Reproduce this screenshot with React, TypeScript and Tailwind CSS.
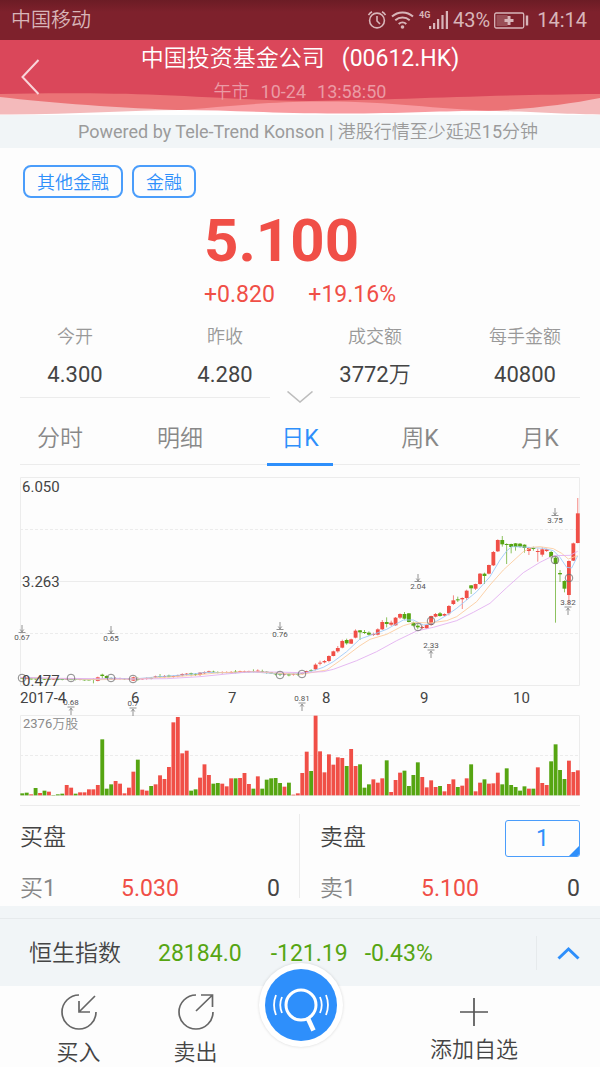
import React, { useState } from "react";

type Side = "r" | "g";

// [side, high, body top, body bottom, low], in thirds of a pixel
type Candle = [Side, number, number, number, number];

interface Mark {
  x: number;
  y: number;
  text: string;
  up?: boolean;
}

const RED = "#f04f47";
const GREEN = "#56a512";
const STEP = 40 / 3;

const volumes =
  "g6 g8 r3 g22 r7 g14 r11 g1 g3 g5 r31 r23 g5 r9 r9 r18 r18 r31 g168 g20 g33 r43 r35 r6 r23 r71 g107 r17 r14 g28 r33 r60 r49 r85 r219 r235 r126 r134 g14 g18 r53 r93 r61 g35 g37 r35 r27 r51 g51 r52 r67 r34 g20 r57 g20 g47 g51 g52 g37 r26 g38 r2 r6 r67 r131 g73 r239 r132 r69 r123 r92 r114 r112 g88 r139 r88 g93 g23 g33 r48 r38 r51 g105 r10 r46 r68 g74 g28 g61 g99 r55 r24 r45 r25 g28 r12 r34 r48 g25 r29 r51 g93 r12 r38 g48 r35 r36 r68 g33 g81 g31 g25 g14 g27 r20 g20 r84 r37 r31 g102 g153 g76 g49 r104 r70 r75"
    .split(" ")
    .map((v) => ({ side: v[0] as Side, height: Number(v.slice(1)) }));

// the first months barely move, so only the middle of each day is kept
const flatDays = [
  624, 625, 626, 626, 625, 627, 627, 627, 628, 628, 627, 628, 628, 628, 629, 629,
];

const candles: Candle[] = [
  ...flatDays.map((y, i): Candle => [i % 3 === 1 ? "r" : "g", y - 2, y - 1, y + 2, y + 3]),
  ["g", 625, 627, 629, 640], ["r", 620, 622, 633, 634], ["g", 611, 614, 618, 626],
  ["g", 616, 618, 626, 627], ["g", 622, 624, 627, 630], ["r", 622, 625, 627, 630],
  ["r", 623, 625, 627, 629], ["g", 624, 626, 628, 630], ["r", 624, 626, 628, 630],
  ["r", 620, 622, 632, 633], ["g", 622, 626, 629, 632], ["r", 624, 626, 628, 629],
  ["r", 622, 625, 627, 629], ["g", 621, 624, 626, 628], ["r", 617, 619, 622, 624],
  ["g", 612, 619, 621, 624], ["r", 615, 618, 621, 623], ["g", 614, 617, 620, 622],
  ["r", 616, 618, 621, 623], ["r", 614, 616, 619, 622], ["r", 610, 612, 616, 619],
  ["r", 609, 611, 614, 617], ["g", 608, 610, 613, 619], ["g", 609, 612, 614, 618],
  ["r", 606, 608, 615, 618], ["r", 604, 606, 610, 612], ["r", 602, 604, 607, 609],
  ["g", 602, 605, 607, 609], ["g", 604, 606, 608, 610], ["r", 604, 607, 609, 611],
  ["r", 604, 607, 609, 610], ["r", 603, 606, 609, 611], ["g", 600, 605, 608, 610],
  ["r", 602, 604, 606, 608], ["r", 602, 604, 606, 609], ["r", 602, 603, 606, 608],
  ["g", 598, 603, 605, 607], ["r", 598, 602, 605, 607], ["g", 599, 604, 606, 608],
  ["g", 604, 605, 608, 611], ["g", 606, 607, 610, 612], ["g", 608, 610, 613, 616],
  ["g", 608, 611, 614, 618], ["r", 609, 612, 614, 616], ["g", 610, 613, 616, 619],
  ["r", 610, 613, 615, 617], ["g", 608, 612, 614, 617], ["r", 606, 609, 612, 614],
  ["r", 602, 603, 608, 609], ["g", 598, 601, 603, 605],
  ["r", 580, 584, 598, 601], ["r", 572, 578, 581, 586], ["r", 570, 573, 577, 580],
  ["r", 556, 558, 573, 577], ["r", 542, 544, 558, 559], ["r", 528, 534, 544, 548],
  ["r", 509, 513, 533, 535], ["g", 506, 510, 520, 524], ["r", 506, 508, 521, 522],
  ["r", 478, 482, 503, 505], ["g", 480, 481, 487, 510], ["g", 480, 486, 489, 492],
  ["g", 484, 488, 494, 497], ["r", 488, 492, 495, 498], ["r", 475, 478, 494, 496],
  ["r", 450, 456, 478, 480], ["g", 442, 456, 462, 472], ["r", 452, 458, 464, 468],
  ["r", 441, 443, 466, 467], ["r", 430, 432, 443, 447], ["g", 426, 432, 446, 449],
  ["g", 429, 430, 456, 457], ["g", 455, 458, 467, 470], ["g", 462, 467, 472, 478],
  ["r", 467, 471, 474, 478], ["r", 463, 465, 475, 477], ["r", 437, 438, 465, 467],
  ["r", 429, 432, 440, 442], ["g", 426, 430, 438, 440], ["r", 430, 432, 437, 439],
  ["r", 405, 408, 430, 436], ["r", 376, 391, 402, 405], ["g", 380, 388, 391, 396],
  ["r", 382, 384, 388, 417], ["r", 359, 362, 384, 390], ["g", 345, 346, 355, 372],
  ["r", 341, 342, 356, 360], ["r", 309, 311, 342, 344], ["g", 308, 311, 318, 342],
  ["r", 284, 285, 311, 313], ["r", 243, 246, 286, 288], ["r", 208, 210, 244, 246],
  ["g", 198, 210, 223, 230], ["g", 220, 222, 225, 282], ["g", 221, 222, 231, 250],
  ["g", 219, 220, 231, 242], ["g", 219, 221, 230, 233], ["g", 223, 224, 234, 248],
  ["r", 231, 234, 243, 255], ["g", 230, 234, 237, 242], ["r", 236, 243, 246, 275],
  ["r", 232, 238, 254, 260], ["r", 236, 238, 243, 246], ["g", 243, 246, 261, 266],
  ["g", 260, 263, 282, 458], ["g", 300, 309, 313, 336], ["g", 331, 333, 356, 367],
  ["r", 271, 273, 375, 402], ["r", 218, 220, 272, 273], ["r", 84, 130, 219, 220],
];

const averages = [
  {
    color: "#9cc8f8",
    points:
      "0,623 120,627 240,629 270,624 340,627 420,620 500,614 560,607 640,609 700,606 780,612 845,611 880,602 910,592 940,575 980,545 1020,507 1060,493 1100,478 1150,450 1180,450 1210,465 1235,462 1280,436 1310,415 1370,365 1410,320 1440,270 1460,243 1475,230 1510,231 1570,235 1600,242 1620,262 1640,292 1655,294 1673,258",
  },
  {
    color: "#fbcb9c",
    points:
      "0,623 120,626 240,629 340,627 440,622 520,616 600,608 700,605 780,610 845,613 920,600 960,572 1020,527 1050,508 1100,493 1150,467 1185,457 1230,459 1280,452 1310,440 1370,395 1410,345 1450,300 1510,245 1535,232 1560,230 1600,236 1625,250 1645,267 1673,257",
  },
  {
    color: "#e2aef0",
    points:
      "0,622 120,625 240,626 340,627 440,626 540,620 620,612 680,606 760,606 845,608 910,605 940,598 1010,572 1070,545 1130,512 1190,483 1240,472 1310,452 1360,427 1410,400 1460,353 1510,308 1560,277 1600,257 1650,256 1673,244",
  },
];

const rings = [
  [22, 208], [71, 208], [111, 208], [133, 209], [280, 205],
  [302, 204], [418, 157], [431, 151], [555, 90], [569, 108],
];

const marks: Mark[] = [
  { x: 22, y: 167, text: "0.67" },
  { x: 111, y: 168, text: "0.65" },
  { x: 280, y: 164, text: "0.76" },
  { x: 418, y: 116, text: "2.04" },
  { x: 555, y: 50, text: "3.75" },
  { x: 71, y: 232, text: "0.68", up: true },
  { x: 133, y: 233, text: "0.7", up: true },
  { x: 302, y: 228, text: "0.81", up: true },
  { x: 431, y: 175, text: "2.33", up: true },
  { x: 568, y: 132, text: "3.82", up: true },
];

const months = [
  { x: 131, text: "6" },
  { x: 228, text: "7" },
  { x: 322, text: "8" },
  { x: 420, text: "9" },
  { x: 513, text: "10" },
];

const stats = [
  { label: "今开", value: "4.300" },
  { label: "昨收", value: "4.280" },
  { label: "成交额", value: "3772万" },
  { label: "每手金额", value: "40800" },
];

const tabs = ["分时", "明细", "日K", "周K", "月K"];

const StatusBar = () => (
  <div className="flex h-10 items-center justify-between bg-gradient-to-b from-[#6c1c25] to-[#7e212c] to-30% pl-[11px] pr-[13px] text-[20px] text-[#d8b5b9]">
    <span>中国移动</span>
    <div className="flex items-center">
      <svg width="20" height="20" viewBox="0 0 20 20" fill="none" stroke="currentColor" strokeWidth="1.6">
        <circle cx="10" cy="10.5" r="7.4" />
        <path d="M10 6v5l3 3M1.5 5.2A9 9 0 0 1 5 1.8M18.5 5.2A9 9 0 0 0 15 1.8" />
      </svg>
      <svg className="ml-1" width="23" height="20" viewBox="0 0 23 20" fill="none" stroke="currentColor" strokeWidth="2">
        <path d="M1 6.5a15.5 15.5 0 0 1 21 0M4.3 10.3a10.8 10.8 0 0 1 14.4 0M7.7 14a5.6 5.6 0 0 1 7.6 0" />
        <circle cx="11.5" cy="17" r="1.8" fill="currentColor" stroke="none" />
      </svg>
      <svg className="ml-1" width="31" height="20" viewBox="0 0 31 20" fill="currentColor">
        <text x="1" y="8" fontSize="9" fontWeight="700">4G</text>
        <path d="M11 16h2.2v3H11zM15 13h2.2v6H15zM19 9h2.2v10H19zM23.4 5h2.2v14h-2.2zM27.8 1H30v18h-2.2z" />
      </svg>
      <span className="ml-1">43%</span>
      <svg className="ml-1" width="35" height="17" viewBox="0 0 35 17">
        <rect x="0.7" y="1" width="29" height="15" rx="1.5" fill="none" stroke="currentColor" strokeWidth="1.3" />
        <rect x="2.5" y="3" width="11" height="11" fill="currentColor" opacity="0.3" />
        <path d="M15 4v9M10.5 8.5h9" stroke="currentColor" strokeWidth="3" />
        <path d="M33 3.5v10" stroke="currentColor" strokeWidth="2.4" />
      </svg>
      <span className="ml-2">14:14</span>
    </div>
  </div>
);

const Header = () => (
  <header className="relative h-[75px] bg-[#da475a] text-center text-white">
    <svg
      className="absolute inset-x-0 bottom-0 h-[23px] w-full"
      viewBox="0 0 600 23"
      preserveAspectRatio="none"
    >
      <path d="M0 2C50 1 110 1 160 3S250 8 310 9C400 8 480 3 600 2V23H0z" fill="#eb7376" />
      <path d="M150 20C210 17 250 10 320 9.5S430 17 500 19L560 23H150z" fill="#f89ba0" />
      <path d="M0 5C50 11 120 16 190 18.500L150 23H0z" fill="#f4babb" />
      <path d="M600 6C570 12 530 17 488 19L480 23H600z" fill="#f4babb" />
      <path d="M0 22.500C70 23 130 18 180 18S270 21.500 340 21.500S430 19 480 19S550 22 600 22.500V23H0z" fill="#fff" />
    </svg>
    <button aria-label="返回" className="absolute left-5 top-[18px]">
      <svg width="20" height="38" viewBox="0 0 20 38" fill="none" stroke="#f9d5da" strokeWidth="2">
        <path d="M18.500 2L2.500 19l16 17" />
      </svg>
    </button>
    <div className="relative px-10">
      <h1 className="flex justify-center gap-[17px] text-[23px] leading-[38px]">
        <span>中国投资基金公司</span>
        <span>(00612.HK)</span>
      </h1>
      <p className="flex justify-center gap-[11px] text-[18px] leading-[28px] text-[#eb9ba5]">
        <span>午市</span>
        <span>10-24</span>
        <span>13:58:50</span>
      </p>
    </div>
  </header>
);

const KLineChart = () => (
  <svg className="block w-full" viewBox="0 0 600 336">
    <g fill="none" stroke="#ececec">
      <path d="M20.500 7.500h559v208h-559zM20.500 111.500h559M20.500 245.500h559v80h-559zM20 335.500h560" />
      <path d="M20 59.500h560M20 163.500h560M20 285.500h560" strokeDasharray="3 2" />
    </g>
    <g transform="translate(20 0) scale(0.33333)">
      {candles.map(([side, high, top, bottom, low], i) => (
        <g key={i} fill={side === "r" ? RED : GREEN}>
          <rect x={i * STEP + 5.5} y={high} width="2.5" height={low - high} opacity="0.8" />
          <rect x={i * STEP + 1} y={top} width="11.5" height={bottom - top} />
        </g>
      ))}
      {averages.map((line) => (
        <polyline
          key={line.color}
          points={line.points}
          fill="none"
          stroke={line.color}
          strokeWidth="2.6"
          strokeLinejoin="round"
        />
      ))}
      {volumes.map((v, i) => (
        <rect
          key={i}
          x={i * STEP + 1}
          y={976 - v.height}
          width="11.6"
          height={v.height}
          fill={v.side === "r" ? RED : GREEN}
        />
      ))}
    </g>
    <g fill="none" stroke="#6b6b6b" strokeWidth="0.8">
      {rings.map(([x, y]) => (
        <circle key={x} cx={x} cy={y} r="3.8" />
      ))}
    </g>
    {marks.map((m) => (
      <g key={m.text}>
        <text x={m.x} y={m.y + 3} fontSize="8" textAnchor="middle" fill="#555">
          {m.text}
        </text>
        <path
          d={
            m.up
              ? `M${m.x - 3.5} ${m.y + 5}h7M${m.x} ${m.y + 13}v-7M${m.x - 1.8} ${m.y + 8.5}l1.8 -2.3l1.8 2.3`
              : `M${m.x - 3.5} ${m.y - 4.5}h7M${m.x} ${m.y - 12}v7M${m.x - 1.8} ${m.y - 7.5}l1.8 2.3l1.8 -2.3`
          }
          fill="none"
          stroke="#777"
          strokeWidth="0.8"
        />
      </g>
    ))}
    <g fontSize="15" fill="#444">
      <text x="22" y="22">6.050</text>
      <text x="22" y="117">3.263</text>
      <text x="22" y="216">0.477</text>
      <text x="20" y="233">2017-4</text>
      {months.map((m) => (
        <text key={m.text} x={m.x} y="233">
          {m.text}
        </text>
      ))}
    </g>
    <text x="23" y="258" fontSize="13" fill="#8a8a8a">
      2376万股
    </text>
  </svg>
);

const OrderRow = ({ name, price, amount }: { name: string; price: string; amount: string }) => (
  <div className="grid h-9 grid-cols-3 items-center text-[23px]">
    <span className="text-[#888]">{name}</span>
    <span className="text-center text-[#f04f47]">{price}</span>
    <span className="text-right">{amount}</span>
  </div>
);

const App: React.FC = () => {
  const [tab, setTab] = useState("日K");

  return (
    <div className="bg-[#fdfdfd] font-[Roboto,'Noto_Sans_CJK_SC_DemiLight','Noto_Sans_CJK_SC',sans-serif] text-[#444]">
      <StatusBar />
      <Header />
      <p className="bg-[#f1f5f7] pl-4 pt-px text-center text-[18px] leading-8 text-[#9b9b9b]">
        Powered by Tele-Trend Konson | 港股行情至少延迟15分钟
      </p>

      <section className="pt-[17px]">
        <div className="flex gap-[9px] px-[23px] text-[18px] text-[#2e8ffb]">
          <a href="#" className="flex h-[33px] items-center rounded-lg border-2 border-[#4a9dfb] px-3 pt-0.5">
            其他金融
          </a>
          <a href="#" className="flex h-[33px] items-center rounded-lg border-2 border-[#4a9dfb] px-3 pt-0.5">
            金融
          </a>
        </div>
        <div className="mx-auto w-[192px] whitespace-nowrap text-[#f04f47]">
          <div className="text-[60px] font-bold leading-[86px]">5.100</div>
          <div className="flex justify-between text-[23px] leading-[22px]">
            <span>+0.820</span>
            <span>+19.16%</span>
          </div>
        </div>
        <dl className="mt-3 grid grid-cols-4 text-center">
          {stats.map((s) => (
            <div key={s.label}>
              <dt className="text-[18px] leading-[38px] text-[#999]">{s.label}</dt>
              <dd className="pt-0.5 text-[22px] leading-[34px]">{s.value}</dd>
            </div>
          ))}
        </dl>
        <div className="flex h-[10px] items-center px-5">
          <span className="h-px flex-1 bg-[#ececec]" />
          <button aria-label="展开" className="px-[17px]">
            <svg width="26" height="12" viewBox="0 0 26 12" fill="none" stroke="#bdbdbd" strokeWidth="1.6">
              <path d="M0.500 0.500L13 11L25.500 0.500" />
            </svg>
          </button>
          <span className="h-px flex-1 bg-[#ececec]" />
        </div>
      </section>

      <nav className="flex h-[64px] text-[23px]">
        {tabs.map((name) => (
          <button
            key={name}
            onClick={() => setTab(name)}
            className={`relative flex-1 pt-[11px] ${name === tab ? "text-[#2e8ffb]" : "text-[#888]"}`}
          >
            {name}
            {name === tab && (
              <span className="absolute inset-x-[27px] bottom-0 z-10 h-[3px] bg-[#2e8ffb]" />
            )}
          </button>
        ))}
      </nav>
      <div className="-mt-[2px] mb-[5px] ml-5 mr-5 h-px bg-[#ececec]" />

      <KLineChart />

      <section className="flex h-[100px]">
        <div className="flex-1 pl-5 pr-5">
          <h2 className="flex h-[65px] items-center text-[23px]">买盘</h2>
          <OrderRow name="买1" price="5.030" amount="0" />
        </div>
        <div className="my-2 -ml-px w-px bg-[#ececec]" />
        <div className="flex-1 pl-5 pr-5">
          <div className="flex h-[65px] items-center justify-between">
            <h2 className="text-[23px]">卖盘</h2>
            <button className="relative h-[37px] w-[75px] overflow-hidden rounded-[3px] border border-[#4a9dfb] text-[23px] leading-none text-[#2e8ffb]">
              1
              <svg className="absolute bottom-0 right-0" width="10" height="10" viewBox="0 0 10 10">
                <path d="M10 0v10H0z" fill="#2e8ffb" />
              </svg>
            </button>
          </div>
          <OrderRow name="卖1" price="5.100" amount="0" />
        </div>
      </section>

      <section className="bg-[#f1f5f7] pt-3">
        <div className="flex h-[68px] items-center border-t border-[#e6eaec] pl-[29px] text-[23px]">
          <span className="pt-1">恒生指数</span>
          <span className="ml-[37px] pt-1 text-[#56a512]">28184.0</span>
          <span className="ml-[29px] pt-1 text-[#56a512]">-121.19</span>
          <span className="ml-[17px] pt-1 text-[#56a512]">-0.43%</span>
          <button aria-label="更多指数" className="ml-auto flex h-[34px] items-center border-l border-[#e6eaec] pl-5 pr-5">
            <svg width="23" height="14" viewBox="0 0 23 14" fill="none" stroke="#2e8ffb" strokeWidth="3">
              <path d="M1.500 12.500l10 -9.500l10 9.500" />
            </svg>
          </button>
        </div>
      </section>

      <footer className="grid h-[81px] grid-cols-[117fr_117fr_94fr_252fr] pl-5 text-[22px]">
        <button className="flex flex-col items-center pt-[7px]">
          <svg width="38" height="38" viewBox="0 0 38 38" fill="none" stroke="#666" strokeWidth="1.7">
            <path d="M19 2A17 17 0 1 0 36 19M35 3L19 19M19 8v11h11" />
          </svg>
          <span className="leading-[44px]">买入</span>
        </button>
        <button className="flex flex-col items-center pt-[7px]">
          <svg width="38" height="38" viewBox="0 0 38 38" fill="none" stroke="#666" strokeWidth="1.7">
            <path d="M19 2A17 17 0 1 0 36 19M19 18L35 2.500M24 2h11.500v12" />
          </svg>
          <span className="leading-[44px]">卖出</span>
        </button>
        <div className="relative">
          <button
            aria-label="搜索"
            className="absolute -top-[23px] left-1/2 flex size-[84px] -translate-x-1/2 items-center justify-center rounded-full bg-white shadow-[0_0_3px_rgba(0,0,0,0.15)]"
          >
            <svg width="72" height="72" viewBox="0 0 72 72" fill="none" stroke="#fff">
              <circle cx="36" cy="36" r="36" fill="#2e8ffb" stroke="none" />
              <circle cx="36" cy="36" r="15" strokeWidth="3" />
              <path d="M43 49.500l5.500 12" strokeWidth="4.600" />
              <path d="M17 28a20 20 0 0 0 0 16M55 28a20 20 0 0 1 0 16M11 26a27 27 0 0 0 0 20M61 26a27 27 0 0 1 0 20" strokeWidth="1.800" />
            </svg>
          </button>
        </div>
        <button className="flex flex-col items-center pt-3">
          <svg width="28" height="28" viewBox="0 0 28 28" stroke="#555" strokeWidth="1.7">
            <path d="M14 0v28M0 14h28" />
          </svg>
          <span className="leading-[48px]">添加自选</span>
        </button>
      </footer>
    </div>
  );
};

export default App;
